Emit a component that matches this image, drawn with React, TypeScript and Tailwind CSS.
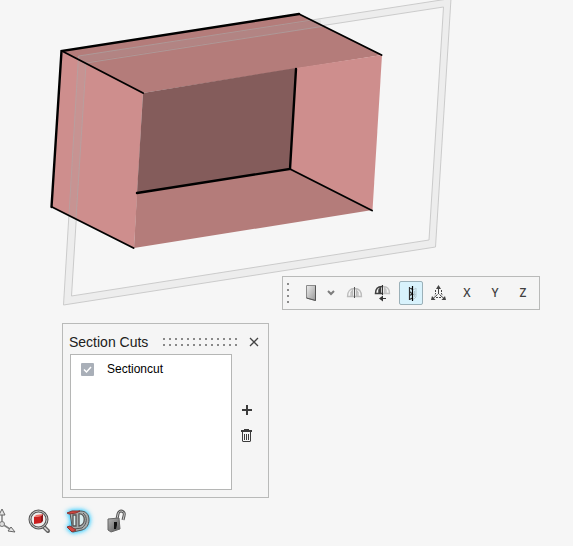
import React from 'react';

const iconButton = 'flex h-6 w-6 shrink-0 items-center justify-center text-[#404040]';

function Model() {
  return (
    <svg
      role="img"
      aria-label="Section cut through a box"
      className="block h-[276px] w-[573px] shrink-0 overflow-visible"
      viewBox="0 0 573 276"
    >
      <path
        fill="#ededed"
        stroke="#cbcbcb"
        fillRule="evenodd"
        d="M78.5 56 451 -1.500 435.500 247 63.500 305ZM86 62 443.500 7 429 240 71.500 296Z"
      />
      <path fill="#ce8e8d" d="M62 51 143 93 134 248 52 207Z" />
      <path fill="#b47c7a" d="M62 51 299 14 382 55 143 93Z" />
      <path fill="#845c5b" d="M143 93 296 68 290 169 137 193Z" />
      <path fill="#ce8e8d" d="M296 68 382 55 372.500 210 290 169Z" />
      <path fill="#b47c7a" d="M137 193 290 169 372.500 210 134 248Z" />
      <path fill="none" stroke="#aaa" strokeOpacity=".18" strokeWidth="7" d="M321 23 82 59 73 217" />
      <path fill="none" stroke="#aaa" strokeOpacity=".6" d="M312 20 78.500 56 69 215M325 26 86 63 76 219" />
      <g fill="none" stroke="#000" strokeLinecap="round">
        <path strokeWidth="2.4" d="M299 14 61.500 51 51.500 207M296 69 290 169 137 193" />
        <path strokeWidth="1.9" d="M62 51 143 93M299 14 381.500 55M52 207 133.500 248M290 169 372 210.500" />
      </g>
    </svg>
  );
}

function Toolbar() {
  return (
    <div
      role="toolbar"
      aria-label="Section display"
      className="ml-[282px] flex h-[34px] w-[258px] shrink-0 items-center border border-[#b9bab9] bg-[#f5f5f5]"
    >
      <svg className="ml-1 h-6 w-1 shrink-0" viewBox="0 0 4 24" fill="#8b8b8b" aria-hidden="true">
        <path d="M0 2h2v2H0zM0 8h2v2H0zM0 14h2v2H0zM0 20h2v2H0z" />
      </svg>
      <button type="button" aria-label="Plane" className={`${iconButton} ml-2`}>
        <svg width="24" height="24" viewBox="0 0 24 24" aria-hidden="true">
          <defs>
            <linearGradient id="plane" x2="1" y2="1">
              <stop stopColor="#ececec" />
              <stop offset="1" stopColor="#999" />
            </linearGradient>
          </defs>
          <path d="M7.500 4.500h9v15l-9-2.500z" fill="url(#plane)" stroke="#8a8a8a" />
          <path d="M16.500 4.500v15l-9-2.500" fill="none" stroke="#555" />
        </svg>
      </button>
      <button type="button" aria-label="Plane options" className="flex h-6 w-4 shrink-0 items-center justify-center">
        <svg width="8" height="8" viewBox="0 0 8 8" fill="none" stroke="#7d7d7d" strokeWidth="2" aria-hidden="true">
          <path d="m1 2 3 3 3-3" />
        </svg>
      </button>
      <div className="ml-1 flex gap-1">
        <button type="button" aria-label="Show both sides" className={iconButton}>
          <svg width="24" height="24" viewBox="0 0 24 24" fill="none" stroke="#bdbdbd" aria-hidden="true">
            <path
              strokeWidth="1.300"
              d="M11.500 7.500C7 7.500 4.500 10.500 4.500 15.500h14c0-5-2.500-8-7-8M8 15v-3.500l1.500-2V15M15 15v-3.500l-1.500-2V15"
            />
            <path stroke="#555" d="M11.500 6v11" />
          </svg>
        </button>
        <button type="button" aria-label="Flip section" className={iconButton}>
          <svg width="24" height="24" viewBox="0 0 24 24" fill="none" aria-hidden="true">
            <path stroke="#c2c2c2" strokeWidth="1.300" d="M12 5.500c4.500 0 6.500 2.500 6.500 7H12M15 12V9l-1.500-2v5" />
            <path stroke="#414141" strokeWidth="1.500" d="M11 5.500C7 5.500 4.500 8 4.500 12.500H11M8 12V9l1.500-2v5" />
            <path stroke="#333" d="M11.500 4v10" />
            <path fill="#333" d="m8 17.500 4-3V17h3v1h-3v2.500z" />
          </svg>
        </button>
        <button
          type="button"
          aria-pressed="true"
          aria-label="Section plane"
          className="flex h-6 w-6 shrink-0 items-center justify-center rounded-[2px] border border-[#9bb0b8] bg-[#d8f2fc]"
        >
          <svg width="22" height="22" viewBox="0 0 22 22" fill="none" aria-hidden="true">
            <path stroke="#b5c9d0" d="M13 7.500h1l2-1.500v9l-2 2h-1M14.500 9v6M13 12.500h3" />
            <path stroke="#333" strokeWidth="1.200" d="M9.500 5v13M9.500 5.500l3 2M9.500 9.500l3 2.500-3 1.500M9.500 17.500l3-1.500" />
            <path stroke="#000" strokeWidth="1.200" d="M12.500 4v15" />
          </svg>
        </button>
        <button type="button" aria-label="Axes" className={iconButton}>
          <svg width="24" height="24" viewBox="0 0 24 24" fill="none" stroke="#444" aria-hidden="true">
            <path d="M11.500 7v6M10.500 13.500l-5 4.500M12.500 13.500l5 4.500" />
            <path d="M8.500 9v4L7 14.500M14.500 9v4l1.500 1.500M9 16.500h5" strokeDasharray="2 1" />
            <path fill="#444" stroke="none" d="m11.500 4 2.500 4H9zM4 19l1-4 3.500 4zM19 19l-1-4-3.500 4z" />
          </svg>
        </button>
        {['X', 'Y', 'Z'].map((axis) => (
          <button
            key={axis}
            type="button"
            aria-label={`${axis} axis`}
            className="flex h-6 w-6 shrink-0 items-center justify-center font-['Noto_Sans',sans-serif] text-xs font-medium text-[#404040]"
          >
            {axis}
          </button>
        ))}
      </div>
    </div>
  );
}

function SectionPanel() {
  return (
    <section
      aria-labelledby="panel-title"
      className="mt-[13px] ml-[62px] h-[175px] w-[207px] shrink-0 border border-[#b9bab9] bg-[#f5f5f5] pr-[6px] pl-[7px]"
    >
      <header className="flex h-[30px] items-center pt-[6px]">
        <h2 id="panel-title" className="-ml-px w-[93px] shrink-0 text-sm whitespace-nowrap">
          Section Cuts
        </h2>
        <svg width="75" height="8" viewBox="0 0 75 8" fill="#898989" className="shrink-0" aria-hidden="true">
          {Array.from({ length: 13 }, (_, i) => (
            <path key={i} d={`M${i * 6 + 1} 0h2v2h-2zM${i * 6 + 1} 6h2v2h-2z`} />
          ))}
        </svg>
        <button type="button" aria-label="Close" className="ml-auto flex h-5 w-4 items-center justify-center">
          <svg width="10" height="10" viewBox="0 0 10 10" fill="none" stroke="#444" strokeWidth="1.300" aria-hidden="true">
            <path d="m1 1 8 8M9 1 1 9" />
          </svg>
        </button>
      </header>
      <div className="flex">
        <div className="h-[136px] w-[162px] shrink-0 border border-[#b5b6b5] bg-white pt-[5px] pl-[10px]">
          <label className="flex items-center gap-[13px] text-xs text-black">
            <span className="grid h-4 w-[13px] place-items-center">
              <input
                type="checkbox"
                defaultChecked
                className="col-start-1 row-start-1 h-[13px] w-[13px] appearance-none rounded-[1px] bg-[#a9afb8]"
              />
              <svg
                className="pointer-events-none col-start-1 row-start-1"
                width="13"
                height="13"
                viewBox="0 0 13 13"
                fill="none"
                stroke="#fff"
                strokeWidth="1.500"
                aria-hidden="true"
              >
                <path d="m3 6.500 2.500 2.500L10 4" />
              </svg>
            </span>
            <span className="leading-[18px]">Sectioncut</span>
          </label>
        </div>
        <div className="flex w-[30px] shrink-0 flex-col items-center gap-[2px] pt-11">
          <button type="button" aria-label="Add section cut" className={iconButton}>
            <svg width="10" height="10" viewBox="0 0 10 10" fill="#3c3c3c" aria-hidden="true">
              <path d="M4 0h2v4h4v2H6v4H4V6H0V4h4z" />
            </svg>
          </button>
          <button type="button" aria-label="Delete section cut" className={iconButton}>
            <svg width="12" height="14" viewBox="0 0 12 14" fill="#3c3c3c" aria-hidden="true">
              <path
                d="M3 0h5v1h3v2h-1v9l-1 1H2l-1-1V3H0V1h3zM4 1h3zM2 3v9h7V3z"
                fillRule="evenodd"
              />
              <path d="M3 5h1v6H3zM5 5h1v6H5zM7 5h1v6H7z" />
            </svg>
          </button>
        </div>
      </div>
    </section>
  );
}

function ViewControls() {
  return (
    <nav aria-label="View controls" className="mt-[7px] flex h-8 items-center">
      <button type="button" aria-label="Coordinate axes" className="h-8 w-5 shrink-0">
        <svg width="20" height="32" viewBox="0 0 20 32" fill="none" aria-hidden="true">
          <path stroke="#808080" strokeWidth="1.500" d="M2 8v11L-2 22M2 19l8 5" />
          <circle cx="2" cy="19" r="2.500" fill="#ddd" stroke="#777" />
          <path fill="#e5e5e5" stroke="#666" d="m2 4 3 6H-1zM15 27l-7-1 3-4z" />
        </svg>
      </button>
      <button type="button" aria-label="Zoom to selection" className="ml-1 h-8 w-8 shrink-0">
        <svg width="32" height="32" viewBox="0 0 32 32" fill="none" aria-hidden="true">
          <path stroke="#656565" strokeWidth="4" strokeLinecap="round" d="m19 21 5 5" />
          <path stroke="#ddd" strokeWidth="1.500" d="m19 21 5 5" />
          <circle cx="14.500" cy="14.500" r="8.500" stroke="#555" strokeWidth="3" fill="#eee" />
          <circle cx="14.500" cy="14.500" r="8.500" stroke="#ccc" />
          <path fill="#c91f20" d="m10 12 7-1v7l-7 1z" />
          <path fill="#f17066" d="m10 12 2-2 7-1-2 2z" />
          <path fill="#8f1517" d="m17 11 2-2v7l-2 2z" />
        </svg>
      </button>
      <button type="button" aria-label="Section cut" aria-pressed="true" className="ml-[6px] h-8 w-8 shrink-0">
        <svg
          width="32"
          height="32"
          viewBox="0 0 32 32"
          fill="none"
          className="overflow-visible [filter:drop-shadow(0_0_2px_#38ccff)_drop-shadow(0_0_2px_#70dcff)]"
          aria-hidden="true"
        >
          <path fill="#a9adad" stroke="#555" d="m8 8 10-2c6 0 9 3 9 9 0 5-3 9-7 10l-9 2-5-4 4-2z" />
          <path fill="#d9eef0" stroke="#555" strokeWidth="1.300" d="M11 10h3v11h-3zM17 9c7-1 7 11 0 12z" />
          <path stroke="#555" d="M21 8c5 4 4 11-1 15M12 24l8-1" />
          <path fill="#d64740" stroke="#8b3431" d="m5 8 5-2h8l-4 2-7 1zM5 22l3-1 6 4-4 2z" />
        </svg>
      </button>
      <button type="button" aria-label="Unlock" className="ml-[6px] h-8 w-8 shrink-0">
        <svg width="32" height="32" viewBox="0 0 32 32" fill="none" aria-hidden="true">
          <defs>
            <linearGradient id="lock" x2="1" y2="1">
              <stop stopColor="#b5b5b5" />
              <stop offset="1" stopColor="#555" />
            </linearGradient>
          </defs>
          <path stroke="#555" strokeWidth="3" d="m17 14 1-5c1-5 8-3 6 2l-1 4" />
          <path stroke="#ccc" d="m17 14 1-5c1-5 8-3 6 2l-1 4" />
          <path fill="url(#lock)" stroke="#666" d="m8 14 11-1 1 11-9 3-3-2z" />
          <path fill="#111" d="M14 17h3v3l-1 4h-2v-4z" />
        </svg>
      </button>
    </nav>
  );
}

export default function App() {
  return (
    <main className="flex min-h-screen flex-col overflow-hidden bg-[#f6f6f6] font-['Liberation_Sans',sans-serif] text-[#202020]">
      <Model />
      <Toolbar />
      <SectionPanel />
      <ViewControls />
    </main>
  );
}
